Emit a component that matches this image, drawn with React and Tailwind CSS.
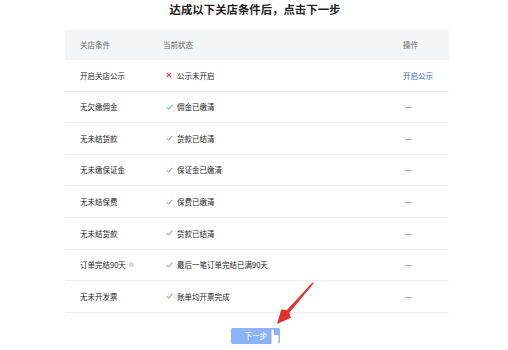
import React from "react";

const rows = [
  { name: "开启关店公示", ok: false, status: "公示未开启", op: "开启公示" },
  { name: "无欠缴佣金", ok: true, status: "佣金已缴清" },
  { name: "无未结货款", ok: true, status: "货款已结清" },
  { name: "无未缴保证金", ok: true, status: "保证金已缴清" },
  { name: "无未结保费", ok: true, status: "保费已缴清" },
  { name: "无未结货款", ok: true, status: "货款已结清" },
  { name: "订单完结90天", ok: true, status: "最后一笔订单完结已满90天", info: true },
  { name: "无未开发票", ok: true, status: "账单均开票完成" },
];

function Check() {
  return (
    <svg width="7" height="6" viewBox="0 0 7 6" className="mr-[4px]">
      <path d="M0.6 3.2 L2.6 5 L6.4 0.8" fill="none" stroke="#35a85a" strokeWidth="1" />
    </svg>
  );
}

function Cross() {
  return (
    <svg width="6" height="6" viewBox="0 0 6 6" className="mr-[5px]">
      <path d="M1 1 L5 5 M5 1 L1 5" fill="none" stroke="#e0424b" strokeWidth="1.1" />
    </svg>
  );
}

export default function App() {
  return (
    <div
      className="relative w-[508px] h-[350px] bg-white overflow-hidden"
      style={{ fontFamily: '"Noto Sans CJK SC", "Noto Sans", sans-serif' }}
    >
      <div className="h-[30px] text-center text-[11.4px] font-bold text-[#1f1f1f] leading-[18px] pl-[2px]">
        达成以下关店条件后，点击下一步
      </div>
      <div className="ml-[65px] w-[384px]">
        <div className="flex items-center h-[30px] bg-[#f4f5f7] text-[7.5px] text-[#666]">
          <div className="w-[98px] pl-[15px]">关店条件</div>
          <div className="w-[240px]">当前状态</div>
          <div>操作</div>
        </div>
        {rows.map((r, i) => (
          <div
            key={i}
            className="flex items-center h-[31.6px] border-b border-[#eeeff1] text-[7.5px] text-[#262626]"
          >
            <div className="w-[98px] pl-[15px] flex items-center">
              {r.name}
              {r.info && <span className="ml-[3px] w-[5px] h-[5px] rounded-full bg-[#d6d8dc] inline-block" />}
            </div>
            <div className="w-[240px] pl-[3px] flex items-center">
              {r.ok ? <Check /> : <Cross />}
              {r.status}
            </div>
            <div className={r.op ? "text-[#2f6bd0]" : "text-[#444] pl-[2px]"}>
              {r.op || "—"}
            </div>
          </div>
        ))}
        <div className="flex justify-center mt-[15px] mr-[4px]">
          <div className="relative w-[49px] h-[16px] rounded-[2px] bg-[#8db3f7] text-white text-[7.5px] flex items-center pl-[14px]">
            下一步
            <svg className="absolute left-[39px] top-[1px]" width="10" height="15" viewBox="0 0 10 15">
              <path d="M1.5 0.5 H3.8 V6 H8.5 V15 H1.5 Z" fill="#ffffff" />
            </svg>
          </div>
        </div>
      </div>
      <svg className="absolute left-0 top-0 pointer-events-none" width="508" height="350" viewBox="0 0 508 350">
        <polygon
          points="313.6,283.4 289.3,312.7 290.9,317.8 277,324 281.4,309.3 286.7,310.3 312.4,282.6"
          fill="#e5322d"
        />
      </svg>
    </div>
  );
}
